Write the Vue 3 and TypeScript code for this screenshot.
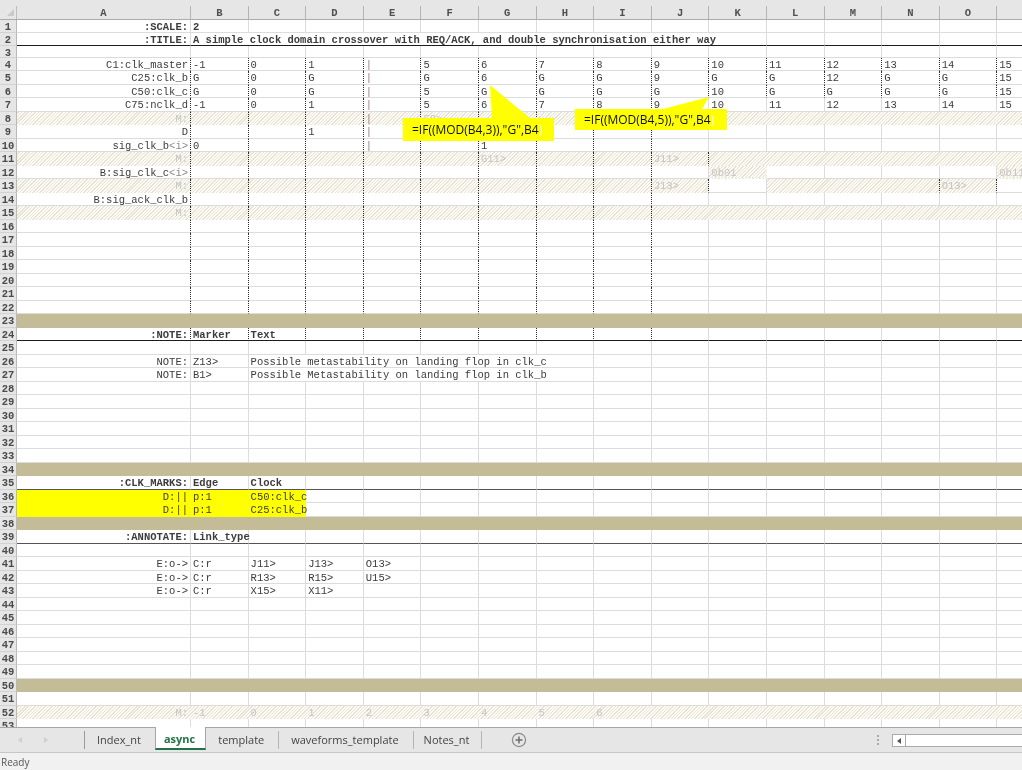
<script setup lang="ts">

import {computed} from 'vue'

type Cell = {
  text: string,
  tag: string,
  span: number,
  classes: (string | boolean)[],
}

const letters = 'ABCDEFGHIJKLMNOP'.split('')
const charWidth = 6.3
const colWidth = 57.6

const sep = '|'

const data: Record<number, string[]> = {
  1: [':SCALE:', '2'],
  2: [':TITLE:', 'A simple clock domain crossover with REQ/ACK, and double synchronisation either way'],
  4: ['C1:clk_master', '-1', '0', '1', sep, '5', '6', '7', '8', '9', '10', '11', '12', '13', '14', '15'],
  5: ['C25:clk_b', 'G', '0', 'G', sep, 'G', '6', 'G', 'G', '9', 'G', 'G', '12', 'G', 'G', '15'],
  6: ['C50:clk_c', 'G', '0', 'G', sep, '5', 'G', 'G', 'G', 'G', '10', 'G', 'G', 'G', 'G', '15'],
  7: ['C75:nclk_d', '-1', '0', '1', sep, '5', '6', '7', '8', '9', '10', '11', '12', '13', '14', '15'],
  8: ['M:', '', '', '', sep, 'F8>'],
  9: ['D', '', '', '1', sep],
  10: ['sig_clk_b<i>', '0', '', '', sep, '', '1'],
  11: ['M:', '', '', '', '', '', 'G11>', '', '', 'J11>'],
  12: ['B:sig_clk_c<i>', '', '', '', '', '', '', '', '', '', '0b01', '', '', '', '', '0b11'],
  13: ['M:', '', '', '', '', '', '', '', '', 'J13>', '', '', '', '', 'O13>'],
  14: ['B:sig_ack_clk_b'],
  15: ['M:'],
  24: [':NOTE:', 'Marker', 'Text'],
  26: ['NOTE:', 'Z13>', 'Possible metastability on landing flop in clk_c'],
  27: ['NOTE:', 'B1>', 'Possible Metastability on landing flop in clk_b'],
  35: [':CLK_MARKS:', 'Edge', 'Clock'],
  36: ['D:||', 'p:1', 'C50:clk_c'],
  37: ['D:||', 'p:1', 'C25:clk_b'],
  39: [':ANNOTATE:', 'Link_type'],
  41: ['E:o->', 'C:r', 'J11>', 'J13>', 'O13>'],
  42: ['E:o->', 'C:r', 'R13>', 'R15>', 'U15>'],
  43: ['E:o->', 'C:r', 'X15>', 'X11>'],
  52: ['M:', '-1', '0', '1', '2', '3', '4', '5', '6'],
}

const hatchRows = [8, 11, 13, 15, 52]
const tanRows = [23, 34, 38, 50]
const boldRows = [1, 2, 24, 35, 39]
const tabs = ['Index_nt', 'async', 'template', 'waveforms_template', 'Notes_nt']

// dark dotted line on the right edge of column c
const isDotted = (r: number, c: number) => {
  if (r >= 4 && r <= 6 && c <= 14) return true
  if (r >= 4 && r <= 24 && c <= 8) return true
  if ((r === 11 || r === 13) && c === 9) return true
  if (r === 13 && (c === 13 || c === 14)) return true
  return false
}

const rows = computed(() => {
  let result = []

  for (let r = 1; r <= 53; r++) {
    let source = data[r] || []
    let cells: Cell[] = []
    let c = 0
    let hatched = hatchRows.includes(r)

    while (c < letters.length) {
      let raw = source[c] || ''
      let tag = raw.endsWith('<i>') ? '<i>' : ''
      let span = 1

      if (c > 0 && raw) {
        span = Math.ceil((raw.length * charWidth) / colWidth)
      }

      let last = c + span - 1
      let muted = raw === 'M:' || r === 52 || /^[A-Z]\d+>$/.test(raw) && r < 15 || raw.startsWith('0b')
      let gap = r === 13 && (c === 10 || c === 15)

      cells.push({
        text: tag ? raw.slice(0, -3) : raw,
        tag,
        span,
        classes: [
          c === 0 && 'cell--label',
          hatched && !gap && 'cell--clear',
          gap && 'cell--white',
          r === 12 && (c === 10 || c === 15) && 'cell--hatch',
          (r === 36 || r === 37) && c < 3 && 'cell--yellow',
          isDotted(r, last) && 'cell--dotted',
          (r === 2 || r === 24) && 'cell--rule',
          (r === 35 || r === 39) && 'cell--rule-soft',
          muted && 'cell--muted',
          raw === sep && 'cell--sep',
          boldRows.includes(r) && 'cell--bold',
        ],
      })

      c += span
    }

    result.push({number: r, tan: tanRows.includes(r), hatched, cells})
  }

  return result
})

</script>

<template>

  <div class="excel">

    <div class="sheet">

      <div class="columns">
        <div class="corner"><i></i></div>
        <div v-for="letter in letters" :key="letter" class="columns__letter">{{ letter }}</div>
      </div>

      <div v-for="row in rows" :key="row.number" :class="['row', 'row--' + row.number, {'row--tan': row.tan, 'row--hatch': row.hatched}]">
        <div class="row__number">{{ row.number }}</div>
        <template v-if="!row.tan">
          <div
            v-for="(cell, i) in row.cells"
            :key="i"
            class="cell"
            :class="cell.classes"
            :style="cell.span > 1 ? {gridColumn: 'span ' + cell.span} : undefined"
          >{{ cell.text }}<span v-if="cell.tag" class="cell__tag">{{ cell.tag }}</span></div>
        </template>
      </div>

      <div class="callout callout--first">
        <svg width="152" height="57" viewBox="0 0 152 57">
          <polygon points="0,33 89,33 87,0 127,33 151,33 151,56 0,56" fill="#ffff00" />
        </svg>
        <span>=IF((MOD(B4,3)),"G",B4<em>)</em></span>
      </div>

      <div class="callout callout--second">
        <svg width="153" height="34" viewBox="0 0 153 34">
          <polygon points="0,12 88,12 134,0 127,12 152,12 152,33 0,33" fill="#ffff00" />
        </svg>
        <span>=IF((MOD(B4,5)),"G",B4<em>)</em></span>
      </div>

    </div>

    <div class="tabbar">
      <div class="tabbar__nav">
        <i class="arrow arrow--left"></i>
        <i class="arrow arrow--right"></i>
      </div>
      <div class="tabs">
        <div v-for="tab in tabs" :key="tab" :class="['tab', {'tab--active': tab === 'async'}]">{{ tab }}</div>
      </div>
      <svg class="tabbar__add" width="16" height="16" viewBox="0 0 16 16">
        <circle cx="8" cy="8" r="6.6" fill="none" stroke="#8a8a8a" stroke-width="1.2" />
        <path d="M4.5 8h7M8 4.5v7" stroke="#6e6e6e" stroke-width="1.5" fill="none" />
      </svg>
      <div class="tabbar__grip"><i></i><i></i><i></i></div>
      <div class="scroll">
        <div class="scroll__button"><i class="arrow arrow--dark"></i></div>
      </div>
    </div>

    <div class="status">Ready</div>

  </div>

</template>

<style>
html, body {
  margin: 0;
  overflow: hidden;
}
</style>

<style scoped>

.excel {
  width: 1022px;
  height: 770px;
  display: flex;
  flex-direction: column;
  overflow: hidden;
  background: #fff;
  font-family: "Liberation Mono", monospace;
  font-size: 10.5px;
  color: #3c3c3c;
  filter: blur(0.35px);
}

.sheet {
  position: relative;
  height: 727px;
  overflow: hidden;
}

.columns,
.row {
  display: grid;
  grid-template-columns: 17px 174px repeat(15, 57.6px);
  grid-template-rows: minmax(0, 1fr);
  width: 1055px;
}

.columns {
  height: 19.5px;
  box-sizing: border-box;
  padding-top: 6px;
  background: #e6e6e6;
  border-bottom: 1px solid #ababab;
}

.corner {
  position: relative;
  border-right: 1px solid #bdbdbd;
}

.corner i {
  position: absolute;
  left: 7px;
  top: 3px;
  width: 0;
  height: 0;
  border-style: solid;
  border-width: 0 0 7px 7px;
  border-color: transparent transparent #c9c9c9 transparent;
}

.columns__letter {
  text-align: center;
  line-height: 14px;
  font-weight: bold;
  color: #505050;
  border-right: 1px solid #b4b4b4;
}

.row {
  height: 13.5px;
  line-height: 15px;
}

.row--1,
.row--2 {
  height: 13px;
}

.row--3 {
  height: 12.2px;
}

.row--tan {
  background: #c4bc96;
}

.row--hatch,
.cell--hatch {
  background: repeating-linear-gradient(-45deg, #e8e4d3 0 1px, #fcfbf7 1px 2.4px);
}

.row__number {
  box-sizing: border-box;
  min-height: 0;
  text-align: center;
  background: #e6e6e6;
  border-right: 1px solid #b8b8b8;
  border-bottom: 1px solid #d2d2d2;
  color: #4a4a4a;
  font-weight: bold;
}

.cell {
  box-sizing: border-box;
  min-width: 0;
  min-height: 0;
  padding-left: 2px;
  white-space: nowrap;
  border-right: 1px solid #dcdcdc;
  border-bottom: 1px solid #dcdcdc;
}

.cell--label {
  padding: 0 2px 0 0;
  text-align: right;
}

.cell--clear,
.cell--hatch {
  border-color: transparent;
}

.cell--white {
  background: #fff;
}

.cell--yellow {
  border-color: transparent;
  background: #ffff00;
}

.cell--dotted {
  border-right: 1px dotted #2b2b2b;
}

.cell--rule {
  border-bottom: 1px solid #1c1c1c;
}

.cell--rule-soft {
  border-bottom: 1px solid #555;
}

.cell--muted {
  color: #c4c4c4;
}

.cell--sep {
  color: #9a7a90;
}

.cell--bold {
  font-weight: bold;
}

.cell__tag {
  color: #8a8a8a;
}

.callout {
  position: absolute;
  font-family: "Open Sans", sans-serif;
  font-size: 12px;
  color: #111;
}

.callout svg {
  display: block;
}

.callout span {
  position: absolute;
  white-space: nowrap;
}

.callout em {
  font-style: normal;
  color: #fff;
}

.callout--first {
  left: 403px;
  top: 85px;
}

.callout--first span {
  left: 9px;
  top: 36px;
}

.callout--second {
  left: 575px;
  top: 97px;
}

.callout--second span {
  left: 9px;
  top: 14px;
}

.tabbar {
  display: flex;
  align-items: stretch;
  height: 26px;
  box-sizing: border-box;
  background: #e6e6e6;
  border-top: 1px solid #a6a6a6;
  border-bottom: 1px solid #c6c6c6;
  font-family: "Open Sans", sans-serif;
  font-size: 11px;
  color: #444;
}

.tabbar__nav {
  width: 84px;
  display: flex;
  align-items: center;
  gap: 22px;
  padding-left: 18px;
  box-sizing: border-box;
}

.arrow {
  width: 0;
  height: 0;
  border-style: solid;
  border-width: 3.5px 4px 3.5px 0;
  border-color: transparent #cfcfcf transparent transparent;
}

.arrow--right {
  border-width: 3.5px 0 3.5px 4px;
  border-color: transparent transparent transparent #cfcfcf;
}

.arrow--dark {
  border-right-color: #555;
}

.tabs {
  display: flex;
  align-items: stretch;
  border-left: 1px solid #9a9a9a;
  margin: 3px 0 3px 0;
}

.tab {
  padding: 0 14px 0 12px;
  line-height: 18px;
  border-right: 1px solid #b4b4b4;
}

.tab:last-child {
  padding: 0 12px 0 10px;
}

.tab--active {
  margin: -4px 0 -1px -1px;
  padding: 3px 10px 0 8px;
  background: #fff;
  color: #217346;
  font-weight: bold;
  border-left: 1px solid #a6a6a6;
  border-right: 1px solid #a6a6a6;
  border-bottom: 2px solid #217346;
}

.tabbar__add {
  align-self: center;
  margin-left: 29px;
}

.tabbar__grip {
  align-self: center;
  margin-left: auto;
  display: flex;
  flex-direction: column;
  gap: 2px;
}

.tabbar__grip i {
  width: 2px;
  height: 2px;
  background: #a9a9a9;
}

.scroll {
  margin: 6px 0 5px 13px;
  width: 130px;
  box-sizing: border-box;
  background: #fff;
  border: 1px solid #ababab;
  border-right: 0;
}

.scroll__button {
  width: 13px;
  height: 100%;
  box-sizing: border-box;
  display: flex;
  align-items: center;
  justify-content: center;
  border-right: 1px solid #ababab;
}

.status {
  height: 17px;
  line-height: 19px;
  padding-left: 1px;
  background: #f1f1f1;
  font-family: "Open Sans", sans-serif;
  font-size: 10px;
  color: #555;
}

</style>
